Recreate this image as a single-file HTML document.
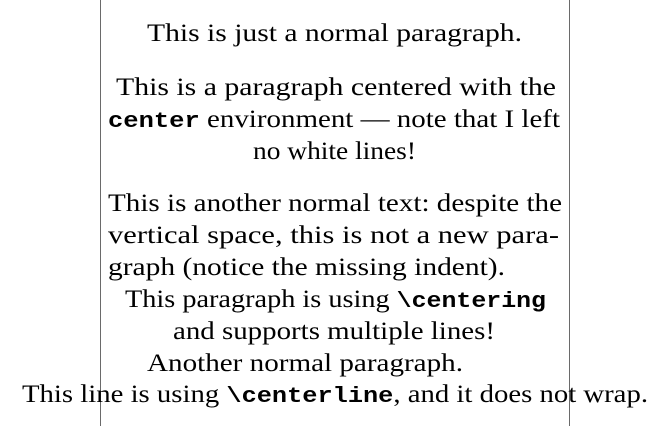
<!DOCTYPE html>
<html><head><meta charset="utf-8"><style>
html,body{margin:0;padding:0;background:#fff;width:670px;height:426px;overflow:hidden;position:relative}
.v{position:absolute;top:0;width:1px;height:426px;background:#6a6a6a}
.l{position:absolute;white-space:nowrap;font-family:"Liberation Serif",serif;font-size:25px;line-height:25px;color:#000;transform-origin:0 0}
.m{font-family:"Liberation Mono",monospace;font-weight:bold;font-size:22px}
</style></head><body>
<div class="v" style="left:100px"></div>
<div class="v" style="left:569px"></div>
<div class="l" id="a0">This is just a normal paragraph.</div>
<div class="l" id="a1">This is a paragraph centered with the</div>
<div class="l" id="a2"><span class="m">center</span> environment — note that I left</div>
<div class="l" id="a3">no white lines!</div>
<div class="l" id="a4">This is another normal text: despite the</div>
<div class="l" id="a5">vertical space, this is not a new para-</div>
<div class="l" id="a6">graph (notice the missing indent).</div>
<div class="l" id="a7">This paragraph is using <span class="m">\centering</span></div>
<div class="l" id="a8">and supports multiple lines!</div>
<div class="l" id="a9">Another normal paragraph.</div>
<div class="l" id="a10">This line is using <span class="m">\centerline</span>, and it does not wrap.</div>
<script>
var L=[[147,522,42],[116,556,96],[108,560,128],[253,416,160],[108,562,212],[108,559,244],[108,505,276],[125,546,308],[173,495,340],[147,463,372],[22,648,403]];
for(var i=0;i<L.length;i++){var e=document.getElementById('a'+i);var w=e.getBoundingClientRect().width;
e.style.left=L[i][0]+'px';e.style.top=(L[i][2]-21)+'px';e.style.transform='scaleX('+((L[i][1]-L[i][0])/w)+')';}
</script>
</body></html>
